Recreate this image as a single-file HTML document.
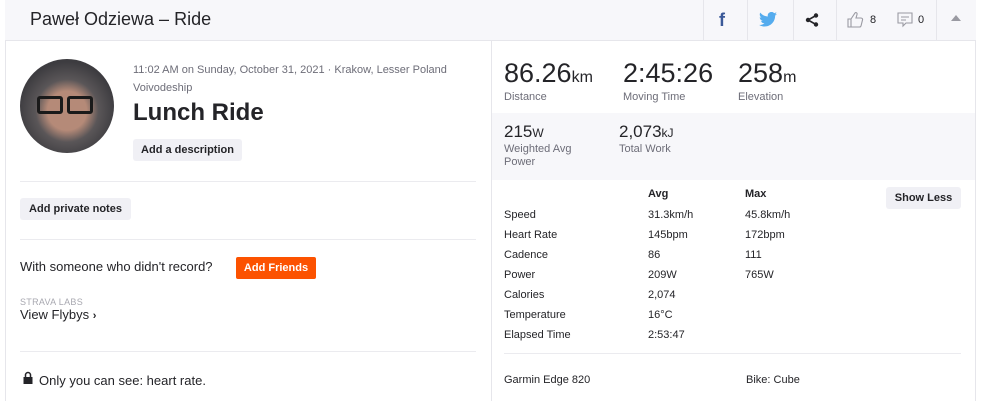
<!DOCTYPE html>
<html><head><meta charset="utf-8"><style>
*{box-sizing:border-box;margin:0;padding:0}
body{width:1000px;height:401px;background:#fff;font-family:"Liberation Sans",sans-serif;color:#242428;position:relative;overflow:hidden}
.a{position:absolute;white-space:nowrap}
.btn{position:absolute;background:#f0f0f5;border-radius:3px;font-size:11px;font-weight:bold;color:#242428;display:flex;align-items:center;justify-content:center}
.hr{position:absolute;height:1px;background:#ebebef}
.g{color:#6d6d78}
.s{font-size:11px}
</style></head><body>
<div class="a" style="left:5px;top:0;width:971px;height:401px;border-left:1px solid #e6e6eb;border-right:1px solid #e6e6eb"></div>
<div class="a" style="left:5px;top:0;width:971px;height:41px;background:#f7f7fa;border-bottom:1px solid #e6e6eb"></div>
<div class="a" style="left:30px;top:9px;font-size:18px;color:#242428">Paweł Odziewa – Ride</div>
<div class="a" style="left:703px;top:0;width:1px;height:40px;background:#e6e6eb"></div>
<div class="a" style="left:747px;top:0;width:1px;height:40px;background:#e6e6eb"></div>
<div class="a" style="left:793px;top:0;width:1px;height:40px;background:#e6e6eb"></div>
<div class="a" style="left:836px;top:0;width:1px;height:40px;background:#e6e6eb"></div>
<div class="a" style="left:936px;top:0;width:1px;height:40px;background:#e6e6eb"></div>
<div class="a" style="left:719px;top:10px;font-size:18px;font-weight:bold;color:#3b5998">f</div>
<svg class="a" style="left:759px;top:12px" width="18" height="15" viewBox="0 0 24 20"><path fill="#55acee" d="M24 2.4a10 10 0 0 1-2.8.8A5 5 0 0 0 23.3.4a10 10 0 0 1-3.1 1.2A4.9 4.9 0 0 0 11.8 6 14 14 0 0 1 1.7.9a4.9 4.9 0 0 0 1.5 6.6A4.9 4.9 0 0 1 1 6.9a4.9 4.9 0 0 0 3.9 4.8 5 5 0 0 1-2.2.1 4.9 4.9 0 0 0 4.6 3.4A9.9 9.9 0 0 1 0 17.2 14 14 0 0 0 7.5 19.4c9 0 14-7.5 14-14v-.6A10 10 0 0 0 24 2.4z"/></svg>
<svg class="a" style="left:805px;top:13px" width="14" height="14" viewBox="0 0 14 14"><circle cx="11" cy="2.5" r="2.2" fill="#242428"/><circle cx="3" cy="7" r="2.2" fill="#242428"/><circle cx="11" cy="11.5" r="2.2" fill="#242428"/><path d="M11 2.5L3 7l8 4.5" stroke="#242428" stroke-width="1.6" fill="none"/></svg>
<svg class="a" style="left:847px;top:11px" width="17" height="17" viewBox="0 0 17 17"><path d="M1 8h3v8H1zM4 8l4-6c1-1 2.5 0 2 1.5L9 7h5c1 0 2 1 1.5 2l-1.5 6c-.3.7-1 1-1.5 1H4" fill="none" stroke="#9a9aa2" stroke-width="1.1"/></svg>
<div class="a" style="left:870px;top:14px;font-size:11px;color:#242428">8</div>
<svg class="a" style="left:897px;top:12px" width="16" height="16" viewBox="0 0 16 16"><path d="M1 1h14v10H9l-3 3v-3H1z" fill="none" stroke="#9a9aa2" stroke-width="1.1"/><path d="M4 5h8M4 8h5" stroke="#9a9aa2"/></svg>
<div class="a" style="left:918px;top:14px;font-size:11px;color:#242428">0</div>
<div class="a" style="left:951px;top:15px;width:0;height:0;border-left:5px solid transparent;border-right:5px solid transparent;border-bottom:6px solid #9a9aa2"></div>

<div class="a" style="left:491px;top:41px;width:1px;height:360px;background:#e6e6eb"></div>
<div class="a" style="left:20px;top:59px;width:94px;height:94px;border-radius:50%;background:radial-gradient(circle at 50% 55%,#b58a78 0 28%,#5a5658 45%,#3d3c40 70%)"></div>
<div class="a" style="left:37px;top:96px;width:26px;height:18px;border:3px solid #1a1a1a;border-radius:3px"></div>
<div class="a" style="left:67px;top:96px;width:26px;height:18px;border:3px solid #1a1a1a;border-radius:3px"></div>
<div class="a s g" style="left:133px;top:64px">11:02 AM on Sunday, October 31, 2021 · Krakow, Lesser Poland</div>
<div class="a s g" style="left:133px;top:82px">Voivodeship</div>
<div class="a" style="left:133px;top:99px;font-size:24px;font-weight:bold">Lunch Ride</div>
<div class="btn" style="left:133px;top:139px;width:109px;height:22px">Add a description</div>
<div class="hr" style="left:20px;top:181px;width:456px"></div>
<div class="btn" style="left:20px;top:198px;width:111px;height:22px">Add private notes</div>
<div class="hr" style="left:20px;top:239px;width:456px"></div>
<div class="a" style="left:20px;top:259px;font-size:13px">With someone who didn't record?</div>
<div class="btn" style="left:236px;top:257px;width:80px;height:22px;background:#fc5200;color:#fff;border-radius:2px">Add Friends</div>
<div class="a" style="left:20px;top:297px;font-size:9px;color:#a8a8b0;letter-spacing:.3px">STRAVA LABS</div>
<div class="a" style="left:20px;top:307px;font-size:13px">View Flybys <b style="font-size:11px">›</b></div>
<div class="hr" style="left:20px;top:351px;width:456px"></div>
<svg class="a" style="left:23px;top:371px" width="10" height="13" viewBox="0 0 10 13"><path d="M2.5 6V4a2.5 2.5 0 0 1 5 0v2" stroke="#242428" stroke-width="1.5" fill="none"/><rect x="0.5" y="6" width="9" height="7" fill="#242428"/></svg>
<div class="a" style="left:39px;top:373px;font-size:13px">Only you can see: heart rate.</div>

<div class="a" style="left:504px;top:58px;font-size:27px">86.26<span style="font-size:16px">km</span></div>
<div class="a s g" style="left:504px;top:91px">Distance</div>
<div class="a" style="left:623px;top:58px;font-size:27px">2:45:26</div>
<div class="a s g" style="left:623px;top:91px">Moving Time</div>
<div class="a" style="left:738px;top:58px;font-size:27px">258<span style="font-size:16px">m</span></div>
<div class="a s g" style="left:738px;top:91px">Elevation</div>
<div class="a" style="left:492px;top:113px;width:483px;height:67px;background:#f7f7fa"></div>
<div class="a" style="left:504px;top:122px;font-size:17px">215<span style="font-size:12px">W</span></div>
<div class="a s g" style="left:504px;top:143px;line-height:13px">Weighted Avg<br>Power</div>
<div class="a" style="left:619px;top:122px;font-size:17px">2,073<span style="font-size:12px">kJ</span></div>
<div class="a s g" style="left:619px;top:143px">Total Work</div>
<div class="btn" style="left:886px;top:187px;width:75px;height:22px">Show Less</div>
<div class="a s" style="left:648px;top:188px;font-weight:bold">Avg</div>
<div class="a s" style="left:745px;top:188px;font-weight:bold">Max</div>
<div class="a s" style="left:504px;top:205px;line-height:20px">Speed<br>Heart Rate<br>Cadence<br>Power<br>Calories<br>Temperature<br>Elapsed Time</div>
<div class="a s" style="left:648px;top:205px;line-height:20px">31.3km/h<br>145bpm<br>86<br>209W<br>2,074<br>16°C<br>2:53:47</div>
<div class="a s" style="left:745px;top:205px;line-height:20px">45.8km/h<br>172bpm<br>111<br>765W</div>
<div class="hr" style="left:504px;top:353px;width:457px"></div>
<div class="a s" style="left:504px;top:374px">Garmin Edge 820</div>
<div class="a s" style="left:746px;top:374px">Bike: Cube</div>
</body></html>
